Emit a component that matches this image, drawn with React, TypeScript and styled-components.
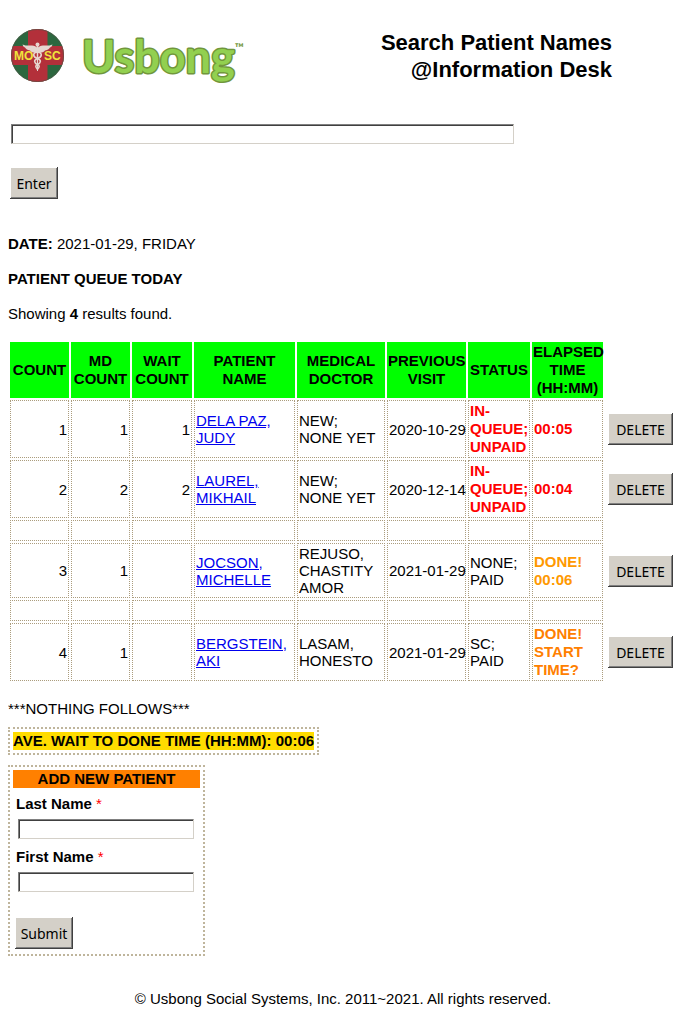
import React from "react";
import styled, { createGlobalStyle } from "styled-components";

const GlobalStyle = createGlobalStyle`
  * { box-sizing: border-box; }
  body {
    margin: 0 0 0 8px;
    background: #fff;
    color: #000;
    font: 15px/18px "Liberation Sans", Arial, sans-serif;
  }
`;

const Header = styled.header`
  display: flex;
  align-items: center;
  max-width: 604px;
  padding: 28px 0 0 3px;
`;

const Brand = styled.svg`
  display: block;
  flex: none;
  margin-right: 18px;
`;

const Title = styled.h1`
  flex: 1;
  margin: 0;
  font-size: 22px;
  line-height: 27px;
  text-align: right;
`;

const TextBox = styled.input<{ $max: number }>`
  display: block;
  width: 100%;
  max-width: ${(p) => p.$max}px;
  height: 20px;
  padding: 2px 3px;
  border: 1px solid;
  border-color: #808080 #d4d0c8 #d4d0c8 #808080;
  background: #fff;
  box-shadow: inset 1px 1px #404040;
  font: inherit;
`;

const Button = styled.button<{ $width: number }>`
  width: ${(p) => p.$width}px;
  height: 32px;
  padding: 1px 0 0;
  border: 0;
  background: #d4d0c8;
  color: #000;
  font: 14px/31px "Noto Sans", sans-serif;
  text-align: center;
  white-space: nowrap;
  box-shadow: inset -1px -1px #404040, inset 1px 1px #fff, inset -2px -2px #808080;
`;

const SearchForm = styled.form`
  padding: 40px 0 0 3px;
  ${Button} { margin: 23px 0 0 -1px; }
`;

const Line = styled.p<{ $top: number }>`
  margin: ${(p) => p.$top}px 0 0;
`;

const Table = styled.table`
  table-layout: fixed;
  width: 667px;
  margin-top: 17px;
  border-spacing: 2px;
`;

const Head = styled.th`
  padding: 1px;
  background: #00ff00;
`;

const Cell = styled.td<{ $number?: boolean; $nowrap?: boolean }>`
  padding: 1px;
  border: 1px dotted #ab9c7d;
  line-height: 17px;
  text-align: ${(p) => (p.$number ? "right" : "left")};
  white-space: ${(p) => (p.$nowrap ? "nowrap" : "normal")};
  &:empty { height: 21px; }
  a { color: #0000ee; }
`;

const Action = styled.td`
  padding: 0 0 0 3px;
  ${Button} { display: block; }
`;

const Flag = styled.strong<{ $color: string }>`
  display: block;
  color: ${(p) => p.$color};
  line-height: 18px;
`;

const Box = styled.div`
  width: fit-content;
  border: 2px dotted #bfb59c;
  padding: 3px;
`;

const Banner = styled.div<{ $color: string }>`
  background: ${(p) => p.$color};
  font-weight: bold;
  text-align: center;
`;

const PatientForm = styled.form`
  width: 187px;
  padding-bottom: 2px;
  label {
    display: block;
    margin: 7px 3px 6px;
    font-weight: bold;
  }
  label span { color: #ff0000; font-weight: normal; }
  ${TextBox} { margin: 0 5px 9px; }
  ${Button} { display: block; margin: 25px 2px 0; }
`;

const Footer = styled.footer`
  padding: 34px 0 7px;
  text-align: center;
`;

const widths = [59, 59, 60, 101, 88, 79, 62, 71, 68];
const headings = [
  "COUNT", "MD COUNT", "WAIT COUNT", "PATIENT NAME", "MEDICAL DOCTOR",
  "PREVIOUS VISIT", "STATUS", "ELAPSED TIME (HH:MM)",
];

type Patient = {
  count: number;
  md: number;
  wait?: number;
  name: string;
  doctor: string;
  visit: string;
  status: string;
  elapsed: string;
  color: string;
  waiting?: boolean;
};

const rows: (Patient | null)[] = [
  { count: 1, md: 1, wait: 1, name: "DELA PAZ, JUDY", doctor: "NEW; NONE YET", visit: "2020-10-29", status: "IN-QUEUE; UNPAID", elapsed: "00:05", color: "#ff0000", waiting: true },
  { count: 2, md: 2, wait: 2, name: "LAUREL, MIKHAIL", doctor: "NEW; NONE YET", visit: "2020-12-14", status: "IN-QUEUE; UNPAID", elapsed: "00:04", color: "#ff0000", waiting: true },
  null,
  { count: 3, md: 1, name: "JOCSON, MICHELLE", doctor: "REJUSO, CHASTITY AMOR", visit: "2021-01-29", status: "NONE; PAID", elapsed: "DONE! 00:06", color: "#ff9900" },
  null,
  { count: 4, md: 1, name: "BERGSTEIN, AKI", doctor: "LASAM, HONESTO", visit: "2021-01-29", status: "SC; PAID", elapsed: "DONE! START TIME?", color: "#ff8000" },
];

function Logos() {
  return (
    <Brand width="236" height="56" viewBox="0 0 236 56" role="img" aria-label="MOSC Usbong">
      <defs>
        <clipPath id="seal"><circle cx="26.5" cy="27.5" r="26.5" /></clipPath>
      </defs>
      <g clipPath="url(#seal)">
        <rect width="54" height="56" fill="#2c673f" />
        <path d="M17 0H36.500V18H54V37H36.500V56H17V37H0V18H17Z" fill="#b3303a" />
      </g>
      <circle cx="26.500" cy="27.500" r="26" fill="none" stroke="#575248" strokeWidth="1" opacity=".6" />
      <g fill="#e6d6d0">
        <path d="M25.500 25C22 25 20 24 19 22.500C16 22 14.500 20.500 14 19.500C12.500 19 12 18 11.500 16.500C15 18 18 17.500 21 17.500C23.500 17.500 25 18.500 26.500 20C28 18.500 29.500 17.500 32 17.500C35 17.500 38 18 41.500 16.500C41 18 40.500 19 39 19.500C38.500 20.500 37 22 34 22.500C33 24 31 25 27.500 25Z" />
        <circle cx="26.500" cy="16.500" r="2" />
        <path d="M25.600 18H27.400L27 43H26Z" />
      </g>
      <g fill="none" stroke="#e6d6d0" strokeLinecap="round" strokeWidth="1.600">
        <path d="M26.500 24C21 25 22 29 26.500 30.500C31 32 29.500 35.500 26.500 36.500C24 37.500 24.500 39.500 26.500 41" />
        <path d="M26.500 24C32 25 31 29 26.500 30.500C22 32 23.500 35.500 26.500 36.500C29 37.500 28.500 39.500 26.500 41" />
      </g>
      <g fill="#f0e43b" fontFamily="Liberation Sans, Arial, sans-serif" fontWeight="bold" fontSize="12">
        <text x="3" y="32">MO</text>
        <text x="33" y="32">SC</text>
      </g>
      <text x="71" y="45" fontFamily="Lato, sans-serif" fontWeight="bold" fontSize="45" fill="#92d050" stroke="#71963c" strokeWidth="3" strokeLinejoin="round" paintOrder="stroke">
        Usbong
      </text>
      <text x="224" y="24" fontFamily="Lato, sans-serif" fontWeight="bold" fontSize="12" fill="#71963c">™</text>
    </Brand>
  );
}

function PatientRow({ patient }: { patient: Patient | null }) {
  if (!patient) {
    return <tr>{headings.map((h) => <Cell key={h} />)}</tr>;
  }
  const p = patient;
  return (
    <tr>
      <Cell $number>{p.count}</Cell>
      <Cell $number>{p.md}</Cell>
      <Cell $number>{p.wait}</Cell>
      <Cell><a href="#patient">{p.name}</a></Cell>
      <Cell>{p.doctor}</Cell>
      <Cell $nowrap>{p.visit}</Cell>
      <Cell>{p.waiting ? <Flag $color={p.color}>{p.status}</Flag> : p.status}</Cell>
      <Cell><Flag $color={p.color}>{p.elapsed}</Flag></Cell>
      <Action><Button $width={65} type="button">DELETE</Button></Action>
    </tr>
  );
}

export default function App() {
  return (
    <>
      <GlobalStyle />
      <Header>
        <Logos />
        <Title>Search Patient Names<br />@Information Desk</Title>
      </Header>
      <main>
        <SearchForm onSubmit={(e) => e.preventDefault()}>
          <TextBox $max={503} type="text" aria-label="Search patient names" />
          <Button $width={48} type="submit">Enter</Button>
        </SearchForm>
        <Line $top={36}><b>DATE:</b> 2021-01-29, FRIDAY</Line>
        <Line $top={17}><b>PATIENT QUEUE TODAY</b></Line>
        <Line $top={17}>Showing <b>4</b> results found.</Line>
        <Table>
          <colgroup>{widths.map((w, i) => <col key={i} style={{ width: w }} />)}</colgroup>
          <thead>
            <tr>{headings.map((h) => <Head key={h} scope="col">{h}</Head>)}</tr>
          </thead>
          <tbody>{rows.map((r, i) => <PatientRow key={i} patient={r} />)}</tbody>
        </Table>
        <Line $top={17}>***NOTHING FOLLOWS***</Line>
        <Line as={Box} $top={9}><Banner $color="#ffdc00">AVE. WAIT TO DONE TIME (HH:MM): 00:06</Banner></Line>
        <Line as={Box} $top={10}>
          <PatientForm onSubmit={(e) => e.preventDefault()}>
            <Banner $color="#ff8000">ADD NEW PATIENT</Banner>
            <label htmlFor="last">Last Name <span>*</span></label>
            <TextBox $max={176} id="last" type="text" />
            <label htmlFor="first">First Name <span>*</span></label>
            <TextBox $max={176} id="first" type="text" />
            <Button $width={58} type="submit">Submit</Button>
          </PatientForm>
        </Line>
      </main>
      <Footer>© Usbong Social Systems, Inc. 2011~2021. All rights reserved.</Footer>
    </>
  );
}
